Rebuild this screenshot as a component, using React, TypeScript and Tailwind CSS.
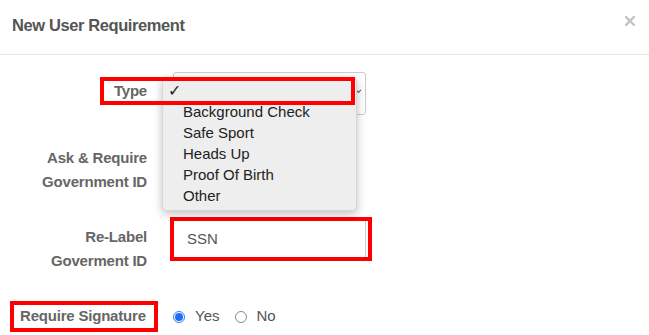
import React from "react";

const font = { fontFamily: '"Liberation Sans", Arial, sans-serif' };

const menuItems = ["Background Check", "Safe Sport", "Heads Up", "Proof Of Birth", "Other"];

export default function App() {
  return (
    <div className="relative w-[649px] h-[335px] bg-white overflow-hidden" style={font}>
      {/* Header */}
      <div className="h-[55px] border-b border-[#e5e5e5] flex items-center justify-between pl-[12px] pr-[14px]">
        <h4 className="text-[16.5px] font-bold text-[#555] tracking-[-0.4px] -mt-[4px]">New User Requirement</h4>
        <svg viewBox="0 0 10 10" className="w-[10px] h-[10px] -mt-[12px]">
          <path d="M1 1L9 9M9 1L1 9" stroke="#c4c4c4" strokeWidth="2.4" strokeLinecap="square" />
        </svg>
      </div>

      {/* Body */}
      <div className="pt-[17px]">
        {/* Type */}
        <div className="flex h-[43px]">
          <label className="w-[147px] text-right text-[15px] font-bold text-[#666] tracking-[-0.2px] leading-[20px] pt-[9px]">
            Type
          </label>
          <div className="ml-[26px] w-[193px] h-[43px] border border-[#ccc] rounded-[3px] flex items-center justify-end pr-[3px]">
            <svg viewBox="0 0 8 6" className="w-[7px] h-[5px] -mt-[4px]">
              <path d="M1 1L4 4L7 1" stroke="#666" strokeWidth="1.4" fill="none" />
            </svg>
          </div>
        </div>

        {/* Ask & Require */}
        <div className="flex mt-[31px]">
          <label className="w-[147px] text-right text-[15px] font-bold text-[#666] tracking-[-0.2px] leading-[24px]">
            Ask &amp; Require
            <br />
            Government ID
          </label>
        </div>

        {/* Re-Label */}
        <div className="flex mt-[23px]">
          <label className="w-[147px] text-right text-[15px] font-bold text-[#666] tracking-[-0.2px] leading-[24px] pt-[8px]">
            Re-Label
            <br />
            Goverment ID
          </label>
          <div className="ml-[23px] w-[202px] h-[44px] border-4 border-[#ff0000]">
            <div className="h-full bg-white border-r border-[#ccc] mr-[2px] flex items-center pl-[13px] text-[15px] text-[#555]">
              SSN
            </div>
          </div>
        </div>

        {/* Require Signature */}
        <div className="flex items-center mt-[28px]">
          <div className="ml-[10px] w-[148px] h-[31px] border-4 border-[#ff0000] flex items-center pl-[6px]">
            <span className="text-[15px] font-bold text-[#666] tracking-[-0.2px] whitespace-nowrap">Require Signature</span>
          </div>
          <div className="ml-[15px] flex items-center text-[15px] text-[#555]">
            <span className="w-[12px] h-[12px] rounded-full border border-[#2f7cf6] flex items-center justify-center">
              <span className="w-[8px] h-[8px] rounded-full bg-[#1f6ff2]" />
            </span>
            <span className="ml-[10px]">Yes</span>
            <span className="ml-[16px] w-[12px] h-[12px] rounded-full border border-[#8a8a8a] bg-white" />
            <span className="ml-[9px]">No</span>
          </div>
        </div>
      </div>

      {/* Open select menu */}
      <div className="absolute left-[162px] top-[77px] w-[195px] h-[134px] bg-[#eeeeee] rounded-[5px] shadow-[0_3px_10px_rgba(0,0,0,0.25)] border border-[#d6d6d6] pt-[2px]">
        <div className="h-[21px] flex items-center text-[#222] leading-[21px]">
          <span className="w-[21px] pl-[5px] text-[16px]">✓</span>
        </div>
        {menuItems.map((item) => (
          <div key={item} className="h-[21px] flex items-center pl-[20px] text-[15px] text-[#222] leading-[21px]">
            {item}
          </div>
        ))}
      </div>

      {/* Annotation around Type */}
      <div className="absolute left-[100px] top-[77px] w-[255px] h-[28px] border-4 border-[#ff0000]" />
    </div>
  );
}
